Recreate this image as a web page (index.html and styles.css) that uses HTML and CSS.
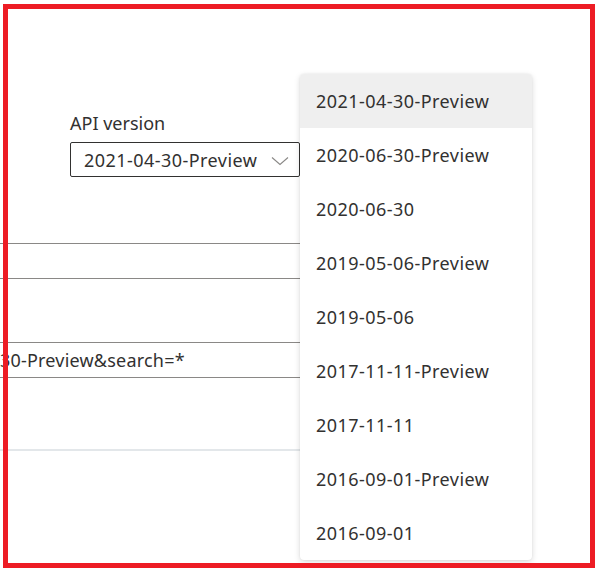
FILE: index.html
```html
<!DOCTYPE html>
<html>
<head>
<meta charset="utf-8">
<link rel="stylesheet" href="styles.css">
</head>
<body>
<div class="page">
  <div class="form">
    <div class="label">API version</div>
    <div class="select">
      <span class="select-value">2021-04-30-Preview</span>
      <svg class="chevron" width="18" height="10" viewBox="0 0 18 10"><path d="M1 1.5 L9 8.5 L17 1.5" fill="none" stroke="#8a8886" stroke-width="1.1"/></svg>
    </div>
    <div class="field field-empty"></div>
    <div class="field"><span class="field-text">30-Preview&amp;search=*</span></div>
    <div class="separator"></div>
  </div>
  <ul class="menu">
    <li class="item selected">2021-04-30-Preview</li>
    <li class="item">2020-06-30-Preview</li>
    <li class="item">2020-06-30</li>
    <li class="item">2019-05-06-Preview</li>
    <li class="item">2019-05-06</li>
    <li class="item">2017-11-11-Preview</li>
    <li class="item">2017-11-11</li>
    <li class="item">2016-09-01-Preview</li>
    <li class="item">2016-09-01</li>
  </ul>
  <div class="frame"></div>
</div>
</body>
</html>
```
FILE: styles.css
```css
html, body {
  margin: 0;
  padding: 0;
  background: #ffffff;
}
body {
  width: 601px;
  height: 568px;
  overflow: hidden;
  font-family: "Noto Sans", "Open Sans", sans-serif;
  color: #323130;
}
.page {
  position: relative;
  width: 601px;
  height: 568px;
}
.form {
  width: 300px;
  padding-top: 112px;
  display: flex;
  flex-direction: column;
}
.label {
  margin-left: 70px;
  font-size: 18px;
  line-height: 22px;
}
.select {
  margin-top: 8px;
  margin-left: 70px;
  height: 35px;
  box-sizing: border-box;
  border: 1px solid #323130;
  border-radius: 2px;
  display: flex;
  align-items: center;
  justify-content: space-between;
  padding: 0 10px 0 13px;
  font-size: 18px;
  letter-spacing: 0.45px;
  white-space: nowrap;
}
.chevron {
  display: block;
  flex: none;
  margin-top: 2px;
}
.field {
  height: 36px;
  box-sizing: border-box;
  border-top: 1px solid #8a8886;
  border-bottom: 1px solid #8a8886;
  overflow: hidden;
  display: flex;
  align-items: center;
  font-size: 18px;
  letter-spacing: 0.2px;
  white-space: nowrap;
}
.field-empty {
  margin-top: 66px;
}
.field + .field {
  margin-top: 63px;
}
.field-text {
  margin-left: 0;
}
.separator {
  margin-top: 71px;
  height: 2px;
  background: #e3e7ea;
}
.menu {
  position: absolute;
  left: 300px;
  top: 74px;
  width: 232px;
  margin: 0;
  padding: 0;
  list-style: none;
  background: #ffffff;
  border-radius: 4px;
  box-shadow: 0 2px 6px rgba(0, 0, 0, 0.14), 0 0 2px rgba(0, 0, 0, 0.08);
  overflow: hidden;
}
.item {
  height: 54px;
  line-height: 54px;
  padding-left: 16px;
  font-size: 18px;
  letter-spacing: 0.45px;
  white-space: nowrap;
}
.item.selected {
  background: #efefef;
}
.frame {
  position: absolute;
  left: 3px;
  top: 4px;
  width: 592px;
  height: 564px;
  box-sizing: border-box;
  border: 5px solid #ed1c24;
}
```
